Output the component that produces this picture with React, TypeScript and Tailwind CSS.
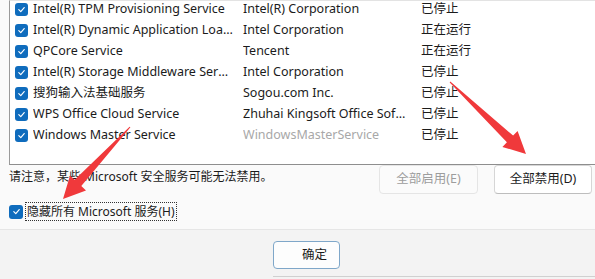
import React from "react";

type Row = { name: string; maker: string; status: string; makerDim?: boolean };

const ROWS: Row[] = [
  { name: "Intel(R) TPM Provisioning Service", maker: "Intel(R) Corporation", status: "已停止" },
  { name: "Intel(R) Dynamic Application Loader Host Interface Service", maker: "Intel Corporation", status: "正在运行" },
  { name: "QPCore Service", maker: "Tencent", status: "正在运行" },
  { name: "Intel(R) Storage Middleware Service", maker: "Intel Corporation", status: "已停止" },
  { name: "搜狗输入法基础服务", maker: "Sogou.com Inc.", status: "已停止" },
  { name: "WPS Office Cloud Service", maker: "Zhuhai Kingsoft Office Software Co.,Ltd", status: "已停止" },
  { name: "Windows Master Service", maker: "WindowsMasterService", status: "已停止", makerDim: true },
];

const FONT = "font-['Segoe_UI','Noto_Sans','Noto_Sans_CJK_SC',sans-serif]";

function Check({ size = 13 }: { size?: number }) {
  return (
    <span
      className="flex shrink-0 items-center justify-center rounded-[3px] bg-[#0f6cbd]"
      style={{ width: size, height: size }}
    >
      <svg width="9" height="9" viewBox="0 0 10 10" fill="none">
        <path d="M2 5.2 L4.2 7.3 L8 2.8" stroke="white" strokeWidth="1.3" strokeLinecap="round" strokeLinejoin="round" />
      </svg>
    </span>
  );
}

export default function App() {
  return (
    <div className={`relative flex h-[279px] w-[595px] flex-col overflow-hidden bg-[#fafafa] text-[12.5px] text-[#1b1b1b] ${FONT}`}>
      <div className="pl-[9px]">
        <div className="h-[165px] w-[620px] border-b border-l border-t border-b-[#8e8e8e] border-l-[#9a9a9a] border-t-[#e3e3e3] bg-white">
          <div className="-mt-[2px] pl-[5px]">
            {ROWS.map((r) => (
              <div key={r.name} className="flex h-[21px] items-center">
                <Check />
                <span className="ml-[5px] w-[210px] truncate pr-[10px]">{r.name}</span>
                <span className={`w-[178px] truncate pr-[12px] ${r.makerDim ? "text-[#a8a8a8]" : ""}`}>{r.maker}</span>
                <span>{r.status}</span>
              </div>
            ))}
          </div>
        </div>
      </div>

      <div className="flex h-[30px] items-start pl-[9px] pr-[3px]">
        <span className="pt-[3px] text-[12px]">请注意，某些 Microsoft 安全服务可能无法禁用。</span>
        <div className="ml-auto flex gap-[16px]">
          <button className="h-[29px] w-[99px] rounded-[4px] border border-[#e5e5e5] bg-[#fbfbfb] text-[#9d9d9d]">
            全部启用(E)
          </button>
          <button className="h-[29px] w-[98px] rounded-[4px] border border-[#d6d6d6] border-b-[#bdbdbd] bg-white text-[#1b1b1b]">
            全部禁用(D)
          </button>
        </div>
      </div>

      <div className="mt-[7px] flex h-[19px] items-center pl-[9px]">
        <Check size={14} />
        <span className="ml-[2px] border border-dotted border-[#333] px-[1px] text-[12px] leading-[17px]">隐藏所有 Microsoft 服务(H)</span>
      </div>

      <div className="mt-auto h-[50px] border-t border-[#e6e6e6] bg-[#f3f3f3] pl-[273px] pt-[11px]">
        <div className="h-[36px] border-b border-[#d0d0d0]">
          <button className="h-[28px] w-[67px] rounded-[4px] border border-[#7fa7c9] bg-[#fdfdfd] pl-[16px] text-[#1b1b1b]">
            确定
          </button>
        </div>
      </div>

      <svg className="pointer-events-none absolute left-0 top-0" width="595" height="279">
        <polygon
          fill="#f0393b"
          points="129.6,126.7 74.7,179.8 70,175.4 63,199 86,190.4 81.3,186 130.4,127.3"
        />
        <polygon
          fill="#f0393b"
          points="449.7,82.4 506.9,142.2 502.4,146.9 526,154 517.6,130.9 513.1,135.6 450.3,81.6"
        />
      </svg>
    </div>
  );
}
